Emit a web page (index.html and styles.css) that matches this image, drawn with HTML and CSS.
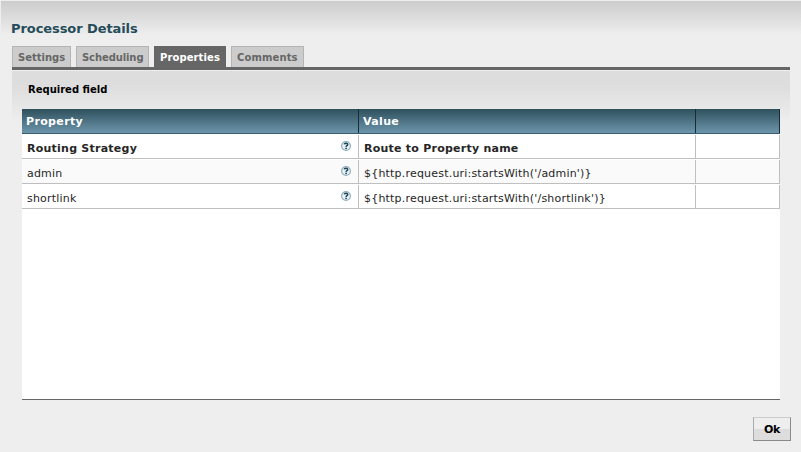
FILE: index.html
```html
<!DOCTYPE html>
<html lang="en">
<head>
<meta charset="utf-8">
<title>Processor Details</title>
<link rel="stylesheet" href="styles.css">
</head>
<body>
<svg width="0" height="0" class="defs" aria-hidden="true">
  <symbol id="help" viewBox="0 0 10 10">
    <circle cx="5" cy="5" r="4.4" fill="#e9f1f5" stroke="#8fb0c0" stroke-width="1.2"/>
    <path d="M3.3 3.3C3.5 1.8 6.9 1.8 6.7 3.6C6.6 4.8 5.1 4.6 5.1 6" fill="none" stroke="#1f4556" stroke-width="1.5"/>
    <rect x="4.3" y="6.7" width="1.6" height="1.4" fill="#1f4556"/>
  </symbol>
</svg>
<div class="dialog">
  <h1 class="title"><span>Processor Details</span></h1>
  <div class="tabs">
    <div class="tab settings"><span>Settings</span></div>
    <div class="tab scheduling"><span>Scheduling</span></div>
    <div class="tab properties selected"><span>Properties</span></div>
    <div class="tab comments"><span>Comments</span></div>
  </div>
  <div class="panel">
    <div class="legend"><span>Required field</span></div>
    <div class="grid">
      <div class="row header">
        <div class="cell"><span>Property</span></div>
        <div class="cell"><span>Value</span></div>
        <div class="cell"></div>
      </div>
      <div class="row required">
        <div class="cell"><span>Routing Strategy</span><svg class="help"><use href="#help"/></svg></div>
        <div class="cell"><span>Route to Property name</span></div>
        <div class="cell"></div>
      </div>
      <div class="row odd">
        <div class="cell"><span>admin</span><svg class="help"><use href="#help"/></svg></div>
        <div class="cell"><span>${http.request.uri:startsWith('/admin')}</span></div>
        <div class="cell"></div>
      </div>
      <div class="row">
        <div class="cell"><span>shortlink</span><svg class="help"><use href="#help"/></svg></div>
        <div class="cell"><span>${http.request.uri:startsWith('/shortlink')}</span></div>
        <div class="cell"></div>
      </div>
    </div>
  </div>
  <div class="buttons"><div class="button"><span>Ok</span></div></div>
</div>
</body>
</html>
```
FILE: styles.css
```css
* { box-sizing: border-box; }
body { margin: 0; width: 801px; height: 452px; overflow: hidden; background: #eee; font: 11px/14px Verdana, "DejaVu Sans", sans-serif; color: #262626; }
.defs { display: block; height: 0; }
span { white-space: nowrap; }
.dialog { height: 452px; border: 1px solid #eee; border-width: 1px 0 0 1px; padding: 0 10px; background: linear-gradient(#ccc, #eee 34px) no-repeat #eee; display: flex; flex-direction: column; }
.title { margin: 0; height: 45px; padding-top: 19px; font-size: 13px; line-height: 17px; color: #264c5a; letter-spacing: -0.08px; }
.tabs { display: flex; gap: 5px; height: 21px; margin-left: 1px; }
.tab { height: 21px; border: 1px solid #b4b4b4; border-bottom: 0; background: #ccc; color: #666; font-weight: bold; font-size: 10px; line-height: 14px; padding: 4px 0 0 5px; }
.settings { width: 59px; }
.scheduling { width: 73px; letter-spacing: -0.1px; }
.properties { width: 72px; letter-spacing: 0.1px; }
.comments { width: 73px; letter-spacing: 0.12px; }
.tab.selected { background: #666; border-color: #666; color: #fff; }
.panel { margin-left: 1px; width: 778px; height: 333px; border-top: 3px solid #666; background: linear-gradient(#ddd 30%, #eee) 0 1px / 100% 50px no-repeat; padding: 0 10px; }
.legend { height: 39px; padding: 13px 0 0 6px; font-size: 10px; font-weight: bold; color: #000; }
.grid { width: 758px; height: 291px; background: #fff; border-bottom: 1px solid #666; letter-spacing: 0.2px; }
.row { display: grid; grid-template-columns: 337px 337px 84px; height: 25px; border-bottom: 1px solid #bfbfbf; padding-top: 1px; }
.cell { border-right: 1px solid #bfbfbf; padding: 6px 7px 0 5px; display: flex; justify-content: space-between; }
.cell span { margin-top: 1px; }
.odd .cell { background: #fafafa; }
.required { font-weight: bold; letter-spacing: 0.24px; }
.header { padding: 0; border-color: #385c6b; background: linear-gradient(#2e505c, #6d95ab); color: #fff; font-weight: bold; letter-spacing: 0.35px; }
.header .cell { border-color: #152d36; padding: 5px 0 0 4px; }
.help { width: 10px; height: 10px; display: block; }
.buttons { display: flex; justify-content: flex-end; padding-top: 17px; }
.button { width: 38px; height: 24px; border: 1px solid; border-color: #ccc #8a8a8a #8a8a8a #aaa; background: linear-gradient(#eee 50%, #ddd 50%); color: #000; font-weight: bold; letter-spacing: -0.3px; padding: 5px 0 0 10px; }
```
